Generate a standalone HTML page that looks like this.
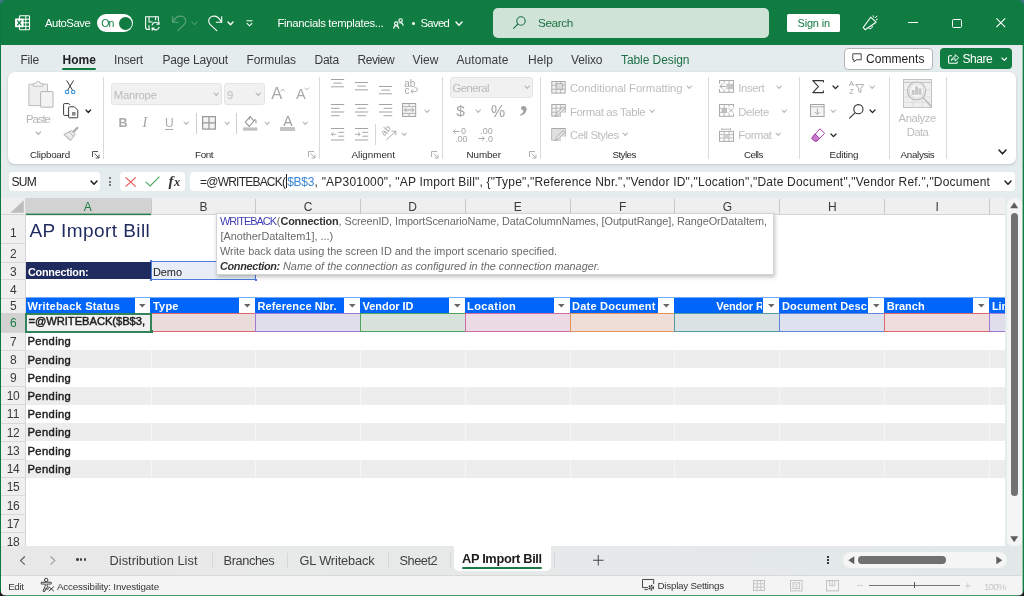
<!DOCTYPE html>
<html lang="en"><head><meta charset="utf-8"><title>Financials templates - Excel</title>
<style>
html,body{margin:0;padding:0;}
body{width:1024px;height:596px;overflow:hidden;background:#E5ECED;font-family:"Liberation Sans", sans-serif;position:relative;}
#root{position:absolute;left:0;top:0;width:1024px;height:596px;overflow:hidden;will-change:transform;}
.a{position:absolute;box-sizing:border-box;}
.t{position:absolute;white-space:pre;line-height:0;}
.t>i{display:inline-block;width:0;height:30px;vertical-align:baseline;}
svg{overflow:visible;}

.sep{background:#D8D8D8;width:1px;}

</style></head><body><div id="root">
<div class="a " style="left:0px;top:0px;width:1024px;height:44.8px;background:#107C41;"></div>
<div class="a " style="left:0px;top:0px;width:1px;height:596px;background:#0F7740;"></div>
<div class="a " style="left:1022px;top:0px;width:1px;height:596px;background:rgba(16,124,65,0.35);"></div>
<div class="a " style="left:1023px;top:0px;width:1px;height:596px;background:#107C41;"></div>
<div class="a " style="left:0px;top:595px;width:1024px;height:1px;background:#4A976C;"></div>
<svg class="a" style="left:14.9px;top:15px;" width="15" height="15.5" viewBox="0 0 15 15.5">
<rect x="4.5" y="0.8" width="10" height="14" rx="0.8" fill="none" stroke="#fff" stroke-width="1.1"/>
<path d="M8 4.2h6M8 7.8h6M8 11.3h6M10.8 1v13.6" stroke="#fff" stroke-width="1" fill="none"/>
<rect x="0" y="3.4" width="8.6" height="8.8" rx="0.8" fill="#fff"/>
<path d="M2.3 5.3l4 5M6.3 5.3l-4 5" stroke="#107C41" stroke-width="1.3" fill="none"/>
</svg>
<div class="t" id="t0" style="top:-3.00px;font-size:11.3px;color:#fff;left:45.00px;letter-spacing:-0.467px;"><i></i>AutoSave</div>
<div class="a " style="left:97px;top:14px;width:36px;height:18px;background:#fff;border-radius:9px;"></div>
<div class="a " style="left:118.5px;top:16.5px;width:13px;height:13px;background:#107C41;border-radius:50%;"></div>
<div class="t" id="t1" style="top:-3.00px;font-size:10.5px;color:#107C41;left:101.30px;letter-spacing:-1.010px;"><i></i>On</div>
<svg class="a" style="left:145px;top:16px;" width="15" height="15" viewBox="0 0 15 15">
<path d="M13.4 5.2V0.8H0.6v11.2l1.5 1.5h3.1" fill="none" stroke="#fff" stroke-width="1.1" stroke-linejoin="round"/>
<path d="M4 0.8v5.2h3.6M10.6 0.8v3.5M4 13.5V9.2" fill="none" stroke="#fff" stroke-width="1.1"/>
<path d="M7 9.3A3.7 3.7 0 0 1 13.7 7.9M14 5.6v2.6h-2.6M14.2 10.9A3.7 3.7 0 0 1 7.5 12.3M7.2 14.6v-2.6h2.6" fill="none" stroke="#fff" stroke-width="1.15"/>
</svg>
<svg class="a" style="left:172px;top:15px;" width="15" height="16" viewBox="0 0 15 16"><path d="M0.7 1.3V7.2H6.6" fill="none" stroke="#62A582" stroke-width="1.1" stroke-linejoin="round"/><path d="M1.2 6.8C3.2 2.8 6.6 0.6 9.8 1.3c3.4 0.8 4.8 4.2 3.4 6.8-.5.9-1.1 1.6-1.8 2.3L5.6 15.6" fill="none" stroke="#62A582" stroke-width="1.1" stroke-linecap="round"/></svg>
<svg class="a" style="left:191.10px;top:20.80px" width="7.00" height="4.80"><path d="M1 1 L3.50 3.80 L6.00 1" fill="none" stroke="#62A582" stroke-width="1" stroke-linecap="round" stroke-linejoin="round"/></svg>
<svg class="a" style="left:207.9px;top:15px;" width="15" height="16" viewBox="0 0 15 16"><g transform="translate(14.4,0) scale(-1,1)"><path d="M0.7 1.3V7.2H6.6" fill="none" stroke="#fff" stroke-width="1.1" stroke-linejoin="round"/><path d="M1.2 6.8C3.2 2.8 6.6 0.6 9.8 1.3c3.4 0.8 4.8 4.2 3.4 6.8-.5.9-1.1 1.6-1.8 2.3L5.6 15.6" fill="none" stroke="#fff" stroke-width="1.1" stroke-linecap="round"/></g></svg>
<svg class="a" style="left:226.80px;top:20.80px" width="7.00" height="4.80"><path d="M1 1 L3.50 3.80 L6.00 1" fill="none" stroke="#fff" stroke-width="1.35" stroke-linecap="round" stroke-linejoin="round"/></svg>
<svg class="a" style="left:246px;top:20px;" width="7" height="7" viewBox="0 0 7 7"><path d="M0.5 0.8h6" stroke="#fff" stroke-width="1"/><path d="M0.8 3.2L3.5 5.8 6.2 3.2" fill="none" stroke="#fff" stroke-width="1.1"/></svg>
<div class="t" id="t2" style="top:-3.00px;font-size:11.3px;color:#fff;left:277.50px;letter-spacing:-0.284px;"><i></i>Financials templates...</div>
<svg class="a" style="left:393px;top:17.5px;" width="11" height="11" viewBox="0 0 11 11"><circle cx="7.6" cy="2.4" r="1.7" fill="none" stroke="#fff" stroke-width="1.1"/><circle cx="3.2" cy="5.6" r="1.7" fill="none" stroke="#fff" stroke-width="1.1"/><path d="M0.6 10.6c.3-2.2 1.3-3 2.6-3s2.3.8 2.6 3M6.4 5.2c.4-.4.8-.5 1.2-.5 1.3 0 2.3.8 2.6 3" fill="none" stroke="#fff" stroke-width="1.1"/></svg>
<div class="a " style="left:412.3px;top:22.1px;width:3px;height:3px;background:#fff;border-radius:50%;"></div>
<div class="t" id="t3" style="top:-3.00px;font-size:11.3px;color:#fff;left:420.50px;letter-spacing:-0.677px;"><i></i>Saved</div>
<svg class="a" style="left:455.30px;top:20.80px" width="8.00" height="5.20"><path d="M1 1 L4.00 4.20 L7.00 1" fill="none" stroke="#fff" stroke-width="1.4" stroke-linecap="round" stroke-linejoin="round"/></svg>
<div class="a " style="left:493px;top:8.4px;width:275.6px;height:29.2px;background:#CFE3D7;border-radius:5px;"></div>
<svg class="a" style="left:512.5px;top:16px;" width="13" height="13" viewBox="0 0 13 13"><circle cx="8" cy="5" r="4.2" fill="none" stroke="#1E7145" stroke-width="1.1"/><path d="M5 8L0.6 12.4" stroke="#1E7145" stroke-width="1.1" stroke-linecap="round"/></svg>
<div class="t" id="t4" style="top:-3.00px;font-size:11.8px;color:#1E7145;left:538.00px;letter-spacing:-0.435px;"><i></i>Search</div>
<div class="a " style="left:786.6px;top:14px;width:53.4px;height:17.5px;background:#fff;border-radius:1.5px;"></div>
<div class="t" id="t5" style="top:-3.00px;font-size:11px;color:#107C41;left:797.50px;letter-spacing:-0.175px;"><i></i>Sign in</div>
<svg class="a" style="left:862px;top:14px;" width="17" height="17" viewBox="0 0 17 17"><path d="M1.2 13.5L3.1 15.7 14.1 8.2 8.7 3.2z" fill="none" stroke="#fff" stroke-width="1.1" stroke-linejoin="round"/><path d="M6.3 13.7A1.9 1.9 0 0 0 9.9 11.3" fill="none" stroke="#fff" stroke-width="1"/><path d="M11.2 1.7l.4 1.4M13.4 3.6l1.5-1.5M14.2 5.8l1.2-.5" fill="none" stroke="#fff" stroke-width="1" stroke-linecap="round"/></svg>
<div class="a " style="left:908px;top:21.6px;width:10px;height:1px;background:#fff;"></div>
<div class="a " style="left:952px;top:18.5px;width:9.5px;height:9.2px;border:1.1px solid #fff;border-radius:1.5px;"></div>
<svg class="a" style="left:996.4px;top:18.3px;" width="9.6" height="9.6" viewBox="0 0 9.6 9.6"><path d="M0.4 0.4l8.8 8.8M9.2 0.4L0.4 9.2" stroke="#fff" stroke-width="1.1"/></svg>
<div class="t" id="t6" style="top:33.50px;font-size:12px;color:#3B3B3B;left:20.50px;letter-spacing:-0.241px;"><i></i>File</div>
<div class="t" id="t7" style="top:33.50px;font-size:12px;color:#222;left:62.50px;font-weight:700;letter-spacing:0.045px;"><i></i>Home</div>
<div class="a " style="left:62.2px;top:67.7px;width:33.8px;height:1.9px;background:#107C41;border-radius:1px;"></div>
<div class="t" id="t8" style="top:33.50px;font-size:12px;color:#3B3B3B;left:114.00px;letter-spacing:-0.185px;"><i></i>Insert</div>
<div class="t" id="t9" style="top:33.50px;font-size:12px;color:#3B3B3B;left:162.50px;letter-spacing:-0.180px;"><i></i>Page Layout</div>
<div class="t" id="t10" style="top:33.50px;font-size:12px;color:#3B3B3B;left:246.50px;letter-spacing:-0.069px;"><i></i>Formulas</div>
<div class="t" id="t11" style="top:33.50px;font-size:12px;color:#3B3B3B;left:314.50px;letter-spacing:-0.246px;"><i></i>Data</div>
<div class="t" id="t12" style="top:33.50px;font-size:12px;color:#3B3B3B;left:357.50px;letter-spacing:-0.429px;"><i></i>Review</div>
<div class="t" id="t13" style="top:33.50px;font-size:12px;color:#3B3B3B;left:412.50px;letter-spacing:0.058px;"><i></i>View</div>
<div class="t" id="t14" style="top:33.50px;font-size:12px;color:#3B3B3B;left:456.50px;letter-spacing:0.083px;"><i></i>Automate</div>
<div class="t" id="t15" style="top:33.50px;font-size:12px;color:#3B3B3B;left:528.00px;letter-spacing:0.089px;"><i></i>Help</div>
<div class="t" id="t16" style="top:33.50px;font-size:12px;color:#3B3B3B;left:571.00px;letter-spacing:-0.097px;"><i></i>Velixo</div>
<div class="t" id="t17" style="top:33.50px;font-size:12px;color:#1E7145;left:621.00px;letter-spacing:-0.076px;"><i></i>Table Design</div>
<div class="a " style="left:844.3px;top:48px;width:88.6px;height:21.6px;background:#fff;border:1px solid #B5B5B5;border-radius:4px;"></div>
<svg class="a" style="left:852.3px;top:53.2px;" width="10" height="10" viewBox="0 0 10 10"><path d="M0.8 0.8h8.4v6H4.2L2 9V6.8H0.8z" fill="none" stroke="#333" stroke-width="0.9" stroke-linejoin="round"/></svg>
<div class="t" id="t18" style="top:33.00px;font-size:12px;color:#222;left:866.00px;letter-spacing:0.065px;"><i></i>Comments</div>
<div class="a " style="left:940px;top:48px;width:72px;height:21.2px;background:#107C41;border-radius:4px;"></div>
<svg class="a" style="left:947.5px;top:53.4px;" width="11" height="10.5" viewBox="0 0 11 10.5"><path d="M4 2.8H1.6a1 1 0 0 0-1 1v5.4a1 1 0 0 0 1 1h6.6a1 1 0 0 0 1-1V8.4" fill="none" stroke="#fff" stroke-width="1.1"/><path d="M3.4 7.6c.3-2.4 1.6-3.6 3.8-3.7V1.6l3.4 3.2-3.4 3.2V5.8c-1.8 0-2.9.5-3.8 1.8z" fill="none" stroke="#fff" stroke-width="0.9" stroke-linejoin="round"/></svg>
<div class="t" id="t19" style="top:33.00px;font-size:12px;color:#fff;left:962.50px;letter-spacing:-0.451px;"><i></i>Share</div>
<svg class="a" style="left:1001.20px;top:56.80px" width="6.60" height="4.40"><path d="M1 1 L3.30 3.40 L5.60 1" fill="none" stroke="#fff" stroke-width="1.1" stroke-linecap="round" stroke-linejoin="round"/></svg>
<div class="a " style="left:8px;top:72.4px;width:1008px;height:91.6px;background:#fff;border-radius:7px;box-shadow:0 1px 3px rgba(0,0,0,0.16);"></div>
<div class="a " style="left:103px;top:77px;width:1px;height:81.5px;background:#DADADA;"></div>
<div class="a " style="left:319px;top:77px;width:1px;height:81.5px;background:#DADADA;"></div>
<div class="a " style="left:441.8px;top:77px;width:1px;height:81.5px;background:#DADADA;"></div>
<div class="a " style="left:540px;top:77px;width:1px;height:81.5px;background:#DADADA;"></div>
<div class="a " style="left:708px;top:77px;width:1px;height:81.5px;background:#DADADA;"></div>
<div class="a " style="left:799.3px;top:77px;width:1px;height:81.5px;background:#DADADA;"></div>
<div class="a " style="left:889px;top:77px;width:1px;height:81.5px;background:#DADADA;"></div>
<div class="a " style="left:945.6px;top:77px;width:1px;height:81.5px;background:#DADADA;"></div>
<div class="t" id="t20" style="top:128.00px;font-size:9.8px;color:#2B2B2B;left:29.90px;letter-spacing:-0.216px;"><i></i>Clipboard</div>
<div class="t" id="t21" style="top:128.00px;font-size:9.8px;color:#2B2B2B;left:195.00px;letter-spacing:-0.346px;"><i></i>Font</div>
<div class="t" id="t22" style="top:128.00px;font-size:9.8px;color:#2B2B2B;left:351.50px;letter-spacing:-0.009px;"><i></i>Alignment</div>
<div class="t" id="t23" style="top:128.00px;font-size:9.8px;color:#2B2B2B;left:466.50px;letter-spacing:-0.065px;"><i></i>Number</div>
<div class="t" id="t24" style="top:128.00px;font-size:9.8px;color:#2B2B2B;left:612.50px;letter-spacing:-0.580px;"><i></i>Styles</div>
<div class="t" id="t25" style="top:128.00px;font-size:9.8px;color:#2B2B2B;left:744.00px;letter-spacing:-0.618px;"><i></i>Cells</div>
<div class="t" id="t26" style="top:128.00px;font-size:9.8px;color:#2B2B2B;left:829.50px;letter-spacing:-0.149px;"><i></i>Editing</div>
<div class="t" id="t27" style="top:128.00px;font-size:9.8px;color:#2B2B2B;left:900.60px;letter-spacing:-0.331px;"><i></i>Analysis</div>
<svg class="a" style="left:92px;top:151px;" width="8" height="8" viewBox="0 0 8 8"><path d="M0.5 6V0.5H6" fill="none" stroke="#555" stroke-width="1"/><path d="M2.6 2.6L7 7M7 3.6V7H3.6" fill="none" stroke="#555" stroke-width="1"/></svg>
<svg class="a" style="left:308px;top:151px;" width="8" height="8" viewBox="0 0 8 8"><path d="M0.5 6V0.5H6" fill="none" stroke="#B0B0B0" stroke-width="1"/><path d="M2.6 2.6L7 7M7 3.6V7H3.6" fill="none" stroke="#B0B0B0" stroke-width="1"/></svg>
<svg class="a" style="left:431px;top:151px;" width="8" height="8" viewBox="0 0 8 8"><path d="M0.5 6V0.5H6" fill="none" stroke="#B0B0B0" stroke-width="1"/><path d="M2.6 2.6L7 7M7 3.6V7H3.6" fill="none" stroke="#B0B0B0" stroke-width="1"/></svg>
<svg class="a" style="left:529px;top:151px;" width="8" height="8" viewBox="0 0 8 8"><path d="M0.5 6V0.5H6" fill="none" stroke="#B0B0B0" stroke-width="1"/><path d="M2.6 2.6L7 7M7 3.6V7H3.6" fill="none" stroke="#B0B0B0" stroke-width="1"/></svg>
<svg class="a" style="left:27.7px;top:80.4px;" width="26" height="28" viewBox="0 0 26 28">
<path d="M0.9 4.2h18.6v21.4H0.9z" fill="#EEEEEE" stroke="#BDBDBD" stroke-width="1" stroke-linejoin="round"/>
<path d="M5.2 6.2V3.6h2.6a2.2 2.2 0 0 1 4.4 0h2.6v2.6z" fill="#F6F6F6" stroke="#BDBDBD" stroke-width="1" stroke-linejoin="round"/>
<rect x="12.6" y="11.6" width="12.4" height="15.6" rx="0.6" fill="#F3F3F3" stroke="#B5B5B5" stroke-width="1"/>
</svg>
<div class="t" id="t28" style="top:92.60px;font-size:11.3px;color:#B4B4B4;left:26.00px;letter-spacing:-1.020px;"><i></i>Paste</div>
<svg class="a" style="left:34.50px;top:131.20px" width="6.60" height="4.40"><path d="M1 1 L3.30 3.40 L5.60 1" fill="none" stroke="#B0B0B0" stroke-width="1.15" stroke-linecap="round" stroke-linejoin="round"/></svg>
<svg class="a" style="left:65.4px;top:80.4px;" width="10.2" height="14.2" viewBox="0 0 10.2 14.2"><path d="M1.6 0.4L7.8 10.6M8.6 0.4L2.4 10.6" stroke="#3A3A3A" stroke-width="1" fill="none"/><circle cx="2" cy="12" r="1.7" fill="none" stroke="#3A96DD" stroke-width="1.15"/><circle cx="8.2" cy="12" r="1.7" fill="none" stroke="#3A96DD" stroke-width="1.15"/></svg>
<svg class="a" style="left:63px;top:103px;" width="15.6" height="15.4" viewBox="0 0 15.6 15.4"><path d="M5.6 12.4H1.4a.8.8 0 0 1-.8-.8V1.4a.8.8 0 0 1 .8-.8h4.4l1.4 1.4" fill="none" stroke="#3A3A3A" stroke-width="1"/><path d="M6.4 3.8h5l3.4 3.4v6.8a.8.8 0 0 1-.8.8H6.4a.8.8 0 0 1-.8-.8V4.6a.8.8 0 0 1 .8-.8z" fill="#fff" stroke="#3A3A3A" stroke-width="1"/><rect x="9" y="9" width="3.6" height="3.6" fill="#8A8A8A"/></svg>
<svg class="a" style="left:84.70px;top:108.75px" width="6.60" height="4.50"><path d="M1 1 L3.30 3.50 L5.60 1" fill="none" stroke="#222" stroke-width="1.3" stroke-linecap="round" stroke-linejoin="round"/></svg>
<svg class="a" style="left:63px;top:127px;" width="16" height="15" viewBox="0 0 16 15"><path d="M14.4 0.9L10.4 4.9" stroke="#ADADAD" stroke-width="2.2" stroke-linecap="round"/><path d="M8.4 3.6L12.2 7.4 7.4 13.6 0.8 7.6z" fill="#ECECEC" stroke="#ADADAD" stroke-width="1" stroke-linejoin="round"/><path d="M6.4 5.2l4.2 4.2" stroke="#ADADAD" stroke-width="0.9"/><path d="M3.4 8.2l3.6 3.8" stroke="#C9C9C9" stroke-width="0.8"/></svg>
<div class="a " style="left:111px;top:83.4px;width:111.4px;height:21.6px;background:#F1F1F1;border:1px solid #E4E4E4;border-radius:3px;"></div>
<div class="t" id="t29" style="top:69.00px;font-size:11.3px;color:#BABABA;left:113.80px;letter-spacing:-0.245px;"><i></i>Manrope</div>
<svg class="a" style="left:213.30px;top:92.20px" width="6.40" height="4.40"><path d="M1 1 L3.20 3.40 L5.40 1" fill="none" stroke="#B0B0B0" stroke-width="1.1" stroke-linecap="round" stroke-linejoin="round"/></svg>
<div class="a " style="left:224.4px;top:83.4px;width:40.3px;height:21.6px;background:#F1F1F1;border:1px solid #E4E4E4;border-radius:3px;"></div>
<div class="t" id="t30" style="top:69.00px;font-size:11.3px;color:#BABABA;left:227.00px;"><i></i>9</div>
<svg class="a" style="left:255.30px;top:92.20px" width="6.40" height="4.40"><path d="M1 1 L3.20 3.40 L5.40 1" fill="none" stroke="#B0B0B0" stroke-width="1.1" stroke-linecap="round" stroke-linejoin="round"/></svg>
<div class="t" id="t31" style="top:68.90px;font-size:16.5px;color:#A9A9A9;left:271.20px;"><i></i>A</div>
<svg class="a" style="left:280.00px;top:89.55px" width="5.60" height="0.10"><path d="M1 1 L2.80 -0.90 L4.60 1" fill="none" stroke="#A9A9A9" stroke-width="0.9" stroke-linecap="round" stroke-linejoin="round"/></svg>
<div class="t" id="t32" style="top:68.90px;font-size:14.5px;color:#A9A9A9;left:296.00px;"><i></i>A</div>
<svg class="a" style="left:303.60px;top:87.35px" width="5.60" height="3.90"><path d="M1 1 L2.80 2.90 L4.60 1" fill="none" stroke="#A9A9A9" stroke-width="0.9" stroke-linecap="round" stroke-linejoin="round"/></svg>
<div class="t" id="t33" style="top:97.00px;font-size:12.5px;color:#A9A9A9;left:118.50px;font-weight:700;"><i></i>B</div>
<div class="t" id="t34" style="top:97.40px;font-size:14px;color:#A3A3A3;left:142.40px;font-style:italic;font-family:'Liberation Serif', serif;"><i></i>I</div>
<div class="t" id="t35" style="top:97.00px;font-size:12px;color:#A9A9A9;left:165.00px;"><i></i>U</div>
<div class="a " style="left:165px;top:128.6px;width:7.8px;height:1px;background:#A9A9A9;"></div>
<svg class="a" style="left:183.30px;top:121.40px" width="6.40" height="4.40"><path d="M1 1 L3.20 3.40 L5.40 1" fill="none" stroke="#B4B4B4" stroke-width="1.1" stroke-linecap="round" stroke-linejoin="round"/></svg>
<div class="a " style="left:196px;top:113px;width:1px;height:21.4px;background:#D0D0D0;"></div>
<svg class="a" style="left:202px;top:116px;" width="14" height="13.7" viewBox="0 0 14 13.7"><rect x="0.6" y="0.6" width="12.8" height="12.5" fill="#F3F3F3" stroke="#9A9A9A" stroke-width="1.25"/><path d="M7 0.6v12.5M0.6 6.85h12.8" stroke="#9A9A9A" stroke-width="1.25"/></svg>
<svg class="a" style="left:224.30px;top:121.40px" width="6.40" height="4.40"><path d="M1 1 L3.20 3.40 L5.40 1" fill="none" stroke="#B4B4B4" stroke-width="1.1" stroke-linecap="round" stroke-linejoin="round"/></svg>
<div class="a " style="left:236px;top:113px;width:1px;height:21.4px;background:#D0D0D0;"></div>
<svg class="a" style="left:243px;top:116px;" width="14.5" height="15" viewBox="0 0 14.5 15"><path d="M7.2 0.6L2.2 6.2l4.1 4.3L11 4.9z" fill="none" stroke="#9C9C9C" stroke-width="1.15" stroke-linejoin="round"/><path d="M7.6 0.4c-1.2.8-1.6 2.2-.8 3.2M10.8 5c.6-1.5 1.8-1.7 2.1-.5.2.9.2 1.9 0 2.9" fill="none" stroke="#9C9C9C" stroke-width="1.1"/><rect x="0" y="11.4" width="14.4" height="3.3" fill="#C2C2C2"/></svg>
<svg class="a" style="left:264.30px;top:121.40px" width="6.40" height="4.40"><path d="M1 1 L3.20 3.40 L5.40 1" fill="none" stroke="#B4B4B4" stroke-width="1.1" stroke-linecap="round" stroke-linejoin="round"/></svg>
<div class="t" id="t36" style="top:96.40px;font-size:14px;color:#9F9F9F;left:283.20px;"><i></i>A</div>
<div class="a " style="left:280px;top:127.4px;width:15px;height:3.4px;background:#C4C4C4;"></div>
<svg class="a" style="left:301.60px;top:121.40px" width="6.40" height="4.40"><path d="M1 1 L3.20 3.40 L5.40 1" fill="none" stroke="#B4B4B4" stroke-width="1.1" stroke-linecap="round" stroke-linejoin="round"/></svg>
<svg class="a" style="left:331.4px;top:79.2px;" width="13.2" height="9" viewBox="0 0 13.2 9"><path d="M0.00 0.50h13.20" stroke="#A4A4A4" stroke-width="1"/><path d="M2.40 4.10h8.40" stroke="#A4A4A4" stroke-width="1"/><path d="M0.00 7.80h13.20" stroke="#A4A4A4" stroke-width="1"/></svg>
<svg class="a" style="left:355px;top:81.9px;" width="13.2" height="9" viewBox="0 0 13.2 9"><path d="M0.00 0.50h13.20" stroke="#A4A4A4" stroke-width="1"/><path d="M2.40 4.10h8.40" stroke="#A4A4A4" stroke-width="1"/><path d="M0.00 7.80h13.20" stroke="#A4A4A4" stroke-width="1"/></svg>
<svg class="a" style="left:379px;top:85.9px;" width="13.2" height="9" viewBox="0 0 13.2 9"><path d="M0.00 0.50h13.20" stroke="#A4A4A4" stroke-width="1"/><path d="M2.40 4.10h8.40" stroke="#A4A4A4" stroke-width="1"/><path d="M0.00 7.80h13.20" stroke="#A4A4A4" stroke-width="1"/></svg>
<svg class="a" style="left:331.4px;top:104px;" width="13.2" height="13" viewBox="0 0 13.2 13"><path d="M0.00 0.50h13.20" stroke="#A4A4A4" stroke-width="1"/><path d="M0.00 4.30h8.60" stroke="#A4A4A4" stroke-width="1"/><path d="M0.00 8.00h13.20" stroke="#A4A4A4" stroke-width="1"/><path d="M0.00 11.70h8.60" stroke="#A4A4A4" stroke-width="1"/></svg>
<svg class="a" style="left:355px;top:104px;" width="13.2" height="13" viewBox="0 0 13.2 13"><path d="M0.00 0.50h13.20" stroke="#A4A4A4" stroke-width="1"/><path d="M2.30 4.30h8.60" stroke="#A4A4A4" stroke-width="1"/><path d="M0.00 8.00h13.20" stroke="#A4A4A4" stroke-width="1"/><path d="M2.30 11.70h8.60" stroke="#A4A4A4" stroke-width="1"/></svg>
<svg class="a" style="left:379px;top:104px;" width="13.2" height="13" viewBox="0 0 13.2 13"><path d="M0.00 0.50h13.20" stroke="#A4A4A4" stroke-width="1"/><path d="M4.60 4.30h8.60" stroke="#A4A4A4" stroke-width="1"/><path d="M0.00 8.00h13.20" stroke="#A4A4A4" stroke-width="1"/><path d="M4.60 11.70h8.60" stroke="#A4A4A4" stroke-width="1"/></svg>
<div class="t" id="t37" style="top:56.60px;font-size:10px;color:#A4A4A4;left:404.20px;"><i></i>ab</div>
<div class="t" id="t38" style="top:63.60px;font-size:10px;color:#A4A4A4;left:404.40px;"><i></i>c</div>
<svg class="a" style="left:409.8px;top:87.4px;" width="8" height="6.6" viewBox="0 0 8 6.6"><path d="M1 4.4h4.4a1.9 1.9 0 0 0 0-3.8H4.6" fill="none" stroke="#A4A4A4" stroke-width="0.9"/><path d="M3 2.4L0.9 4.4 3 6.4" fill="none" stroke="#A4A4A4" stroke-width="0.9"/></svg>
<svg class="a" style="left:402px;top:103px;" width="14.2" height="14" viewBox="0 0 14.2 14"><rect x="0.5" y="0.5" width="13.2" height="13" fill="#F2F2F2" stroke="#A4A4A4" stroke-width="1"/><path d="M0.5 3.6h13.2M0.5 10.4h13.2M7.1 0.5v3.1M7.1 10.4v3.1" stroke="#A4A4A4" stroke-width="0.8"/><path d="M2.4 7h9.4M4.2 5.2L2.4 7l1.8 1.8M10 5.2L11.8 7 10 8.8" fill="none" stroke="#9A9A9A" stroke-width="0.9"/></svg>
<svg class="a" style="left:423.50px;top:108.60px" width="6.40" height="4.40"><path d="M1 1 L3.20 3.40 L5.40 1" fill="none" stroke="#B4B4B4" stroke-width="1.1" stroke-linecap="round" stroke-linejoin="round"/></svg>
<svg class="a" style="left:331.4px;top:127.6px;" width="13.2" height="12.6" viewBox="0 0 13.2 12.6"><path d="M0.00 0.50h13.20" stroke="#A4A4A4" stroke-width="1"/><path d="M7.20 4.30h6.00" stroke="#A4A4A4" stroke-width="1"/><path d="M7.20 8.20h6.00" stroke="#A4A4A4" stroke-width="1"/><path d="M0.00 12.00h13.20" stroke="#A4A4A4" stroke-width="1"/><path d="M0.4 6.25h5M2.4 4.2L0.4 6.25l2 2.05" fill="none" stroke="#A4A4A4" stroke-width="0.9"/></svg>
<svg class="a" style="left:355px;top:127.6px;" width="13.2" height="12.6" viewBox="0 0 13.2 12.6"><path d="M0.00 0.50h13.20" stroke="#A4A4A4" stroke-width="1"/><path d="M7.20 4.30h6.00" stroke="#A4A4A4" stroke-width="1"/><path d="M7.20 8.20h6.00" stroke="#A4A4A4" stroke-width="1"/><path d="M0.00 12.00h13.20" stroke="#A4A4A4" stroke-width="1"/><path d="M0.2 6.25h5M3.2 4.2l2 2.05-2 2.05" fill="none" stroke="#A4A4A4" stroke-width="0.9"/></svg>
<div class="a " style="left:375px;top:123.7px;width:1px;height:21.4px;background:#D6D6D6;"></div>
<svg class="a" style="left:380.7px;top:127px;" width="16" height="13.6" viewBox="0 0 16 13.6"><text x="0" y="0" transform="translate(3.6,9.4) rotate(-48)" font-size="9.4" fill="#A4A4A4" font-family="Liberation Sans, sans-serif">ab</text><path d="M5.2 13L14.6 4.6M10.6 4.2h4.2v4" fill="none" stroke="#A4A4A4" stroke-width="0.9"/></svg>
<svg class="a" style="left:400.80px;top:132.20px" width="6.40" height="4.40"><path d="M1 1 L3.20 3.40 L5.40 1" fill="none" stroke="#B4B4B4" stroke-width="1.1" stroke-linecap="round" stroke-linejoin="round"/></svg>
<div class="a " style="left:450px;top:76.6px;width:82.6px;height:21px;background:#F1F1F1;border:1px solid #E4E4E4;border-radius:3px;"></div>
<div class="t" id="t39" style="top:61.80px;font-size:11.3px;color:#BABABA;left:452.40px;letter-spacing:-0.493px;"><i></i>General</div>
<svg class="a" style="left:523.60px;top:85.20px" width="6.40" height="4.40"><path d="M1 1 L3.20 3.40 L5.40 1" fill="none" stroke="#B0B0B0" stroke-width="1.1" stroke-linecap="round" stroke-linejoin="round"/></svg>
<div class="t" id="t40" style="top:86.40px;font-size:15.5px;color:#A4A4A4;left:456.20px;"><i></i>$</div>
<svg class="a" style="left:474.60px;top:108.60px" width="6.40" height="4.40"><path d="M1 1 L3.20 3.40 L5.40 1" fill="none" stroke="#B4B4B4" stroke-width="1.1" stroke-linecap="round" stroke-linejoin="round"/></svg>
<div class="t" id="t41" style="top:87.00px;font-size:16px;color:#A4A4A4;left:491.00px;"><i></i>%</div>
<div class="t" id="t42" style="top:97.30px;font-size:32px;color:#A2A2A2;left:518.30px;font-weight:700;font-family:'Liberation Serif', serif;"><i></i>’</div>
<div class="t" id="t43" style="top:104.40px;font-size:9px;color:#A4A4A4;left:461.00px;"><i></i>0</div>
<div class="t" id="t44" style="top:111.60px;font-size:9px;color:#A4A4A4;left:455.00px;"><i></i>.00</div>
<svg class="a" style="left:453.4px;top:129.2px;" width="7" height="5" viewBox="0 0 7 5"><path d="M0.5 2.5h6M2.6 0.4L0.5 2.5l2.1 2.1" fill="none" stroke="#A4A4A4" stroke-width="0.9"/></svg>
<div class="t" id="t45" style="top:104.40px;font-size:9px;color:#A4A4A4;left:480.20px;"><i></i>.00</div>
<div class="t" id="t46" style="top:111.60px;font-size:9px;color:#A4A4A4;left:485.60px;"><i></i>.0</div>
<svg class="a" style="left:477.6px;top:136.4px;" width="7" height="5" viewBox="0 0 7 5"><path d="M0.3 2.5h6M4.2 0.4l2.1 2.1-2.1 2.1" fill="none" stroke="#A4A4A4" stroke-width="0.9"/></svg>
<svg class="a" style="left:551.4px;top:80.6px;" width="15" height="13" viewBox="0 0 14.4 13"><rect x="0.5" y="0.5" width="13.4" height="11.6" fill="#F3F3F3" stroke="#A9A9A9" stroke-width="1"/><path d="M0.5 4.2h13.4M0.5 8.2h13.4M4.8 0.5v11.6M9.4 0.5v11.6" stroke="#A9A9A9" stroke-width="0.8"/><rect x="4.8" y="2.6" width="6.6" height="5.6" fill="#DCDCDC" stroke="#A9A9A9" stroke-width="0.8"/></svg>
<svg class="a" style="left:551.4px;top:104.2px;" width="15" height="13" viewBox="0 0 14.4 13"><rect x="0.5" y="0.5" width="13.4" height="11.6" fill="#F3F3F3" stroke="#A9A9A9" stroke-width="1"/><path d="M0.5 4.2h13.4M0.5 8.2h13.4M4.8 0.5v11.6M9.4 0.5v11.6" stroke="#A9A9A9" stroke-width="0.8"/><path d="M13.6 4.2l-6.4 6.6-3.4 1.8 1.4-3.4 6.6-6.4z" fill="#E9E9E9" stroke="#A8A8A8" stroke-width="0.9" stroke-linejoin="round"/><rect x="9.6" y="8.6" width="5" height="4.4" fill="#fff"/></svg>
<svg class="a" style="left:551.4px;top:128px;" width="15" height="13" viewBox="0 0 14.4 13"><rect x="0.5" y="0.5" width="13.4" height="11.6" fill="#F3F3F3" stroke="#A9A9A9" stroke-width="1"/><path d="M0.5 4.2h13.4M0.5 8.2h13.4M4.8 0.5v11.6M9.4 0.5v11.6" stroke="#A9A9A9" stroke-width="0.8"/><rect x="1" y="1" width="12.4" height="10.6" fill="#DFDFDF"/><path d="M13.6 4.2l-6.4 6.6-3.4 1.8 1.4-3.4 6.6-6.4z" fill="#E9E9E9" stroke="#A8A8A8" stroke-width="0.9" stroke-linejoin="round"/><rect x="9.6" y="8.6" width="5" height="4.4" fill="#fff"/></svg>
<div class="t" id="t47" style="top:61.80px;font-size:11.3px;color:#BDBDBD;left:569.90px;letter-spacing:-0.044px;"><i></i>Conditional Formatting</div>
<svg class="a" style="left:686.20px;top:85.00px" width="6.40" height="4.40"><path d="M1 1 L3.20 3.40 L5.40 1" fill="none" stroke="#B4B4B4" stroke-width="1.1" stroke-linecap="round" stroke-linejoin="round"/></svg>
<div class="t" id="t48" style="top:85.60px;font-size:11.3px;color:#BDBDBD;left:569.90px;letter-spacing:-0.365px;"><i></i>Format as Table</div>
<svg class="a" style="left:648.90px;top:108.80px" width="6.40" height="4.40"><path d="M1 1 L3.20 3.40 L5.40 1" fill="none" stroke="#B4B4B4" stroke-width="1.1" stroke-linecap="round" stroke-linejoin="round"/></svg>
<div class="t" id="t49" style="top:109.20px;font-size:11.3px;color:#BDBDBD;left:569.90px;letter-spacing:-0.417px;"><i></i>Cell Styles</div>
<svg class="a" style="left:622.30px;top:132.40px" width="6.40" height="4.40"><path d="M1 1 L3.20 3.40 L5.40 1" fill="none" stroke="#B4B4B4" stroke-width="1.1" stroke-linecap="round" stroke-linejoin="round"/></svg>
<svg class="a" style="left:719px;top:80.4px;" width="15" height="13.6" viewBox="0 0 15 13.6"><rect x="0.5" y="0.5" width="14" height="11.8" fill="#FBFBFB" stroke="#ACACAC"/><path d="M0.5 4.4h14M0.5 8.4h14M5.2 0.5v11.8M10 0.5v11.8" stroke="#ACACAC" stroke-width="0.8"/><rect x="0" y="3.6" width="7.4" height="5.4" fill="#fff"/><rect x="7.6" y="4" width="6.6" height="4.8" fill="#C6C6C6"/><path d="M1 6.4h6.2M3.4 4L1 6.4l2.4 2.4" fill="none" stroke="#A6A6A6" stroke-width="1"/></svg>
<svg class="a" style="left:719px;top:104.2px;" width="15" height="13.6" viewBox="0 0 15 13.6"><rect x="0.5" y="0.5" width="14" height="11.8" fill="#FBFBFB" stroke="#ACACAC"/><path d="M0.5 4.4h14M0.5 8.4h14M5.2 0.5v11.8M10 0.5v11.8" stroke="#ACACAC" stroke-width="0.8"/><rect x="2.6" y="4" width="5.4" height="4.8" fill="#BDBDBD"/><rect x="8.4" y="3.2" width="7" height="6.4" fill="#fff"/><path d="M9.8 4.2l4.4 4.4M14.2 4.2L9.8 8.6" stroke="#ADADAD" stroke-width="1"/></svg>
<svg class="a" style="left:719px;top:127.6px;" width="15" height="13.6" viewBox="0 0 15 13.6"><path d="M2.8 0.2v2M11.6 0.2v2M2.8 1.2h8.8" stroke="#ACACAC" stroke-width="0.9"/><rect x="0.5" y="3.4" width="14" height="10" fill="#FBFBFB" stroke="#ACACAC"/><path d="M0.5 6.6h14M0.5 10h14M5.2 3.4v10M10 3.4v10" stroke="#ACACAC" stroke-width="0.8"/><rect x="5.2" y="6.6" width="4.8" height="3.4" fill="#CFCFCF"/></svg>
<div class="t" id="t50" style="top:61.80px;font-size:11.3px;color:#BDBDBD;left:738.30px;letter-spacing:-0.394px;"><i></i>Insert</div>
<svg class="a" style="left:775.70px;top:85.00px" width="6.40" height="4.40"><path d="M1 1 L3.20 3.40 L5.40 1" fill="none" stroke="#B4B4B4" stroke-width="1.1" stroke-linecap="round" stroke-linejoin="round"/></svg>
<div class="t" id="t51" style="top:85.60px;font-size:11.3px;color:#BDBDBD;left:738.30px;letter-spacing:-0.356px;"><i></i>Delete</div>
<svg class="a" style="left:780.80px;top:108.80px" width="6.40" height="4.40"><path d="M1 1 L3.20 3.40 L5.40 1" fill="none" stroke="#B4B4B4" stroke-width="1.1" stroke-linecap="round" stroke-linejoin="round"/></svg>
<div class="t" id="t52" style="top:109.20px;font-size:11.3px;color:#BDBDBD;left:738.30px;letter-spacing:-0.415px;"><i></i>Format</div>
<svg class="a" style="left:775.20px;top:132.40px" width="6.40" height="4.40"><path d="M1 1 L3.20 3.40 L5.40 1" fill="none" stroke="#B4B4B4" stroke-width="1.1" stroke-linecap="round" stroke-linejoin="round"/></svg>
<svg class="a" style="left:812px;top:80.4px;" width="12" height="13.2" viewBox="0 0 12 13.2"><path d="M11.4 2.6V0.6H0.8L6.4 6.6 0.8 12.6h10.6v-2" fill="none" stroke="#333" stroke-width="1.1" stroke-linejoin="round"/></svg>
<svg class="a" style="left:831.80px;top:84.90px" width="7.00" height="4.60"><path d="M1 1 L3.50 3.60 L6.00 1" fill="none" stroke="#222" stroke-width="1.25" stroke-linecap="round" stroke-linejoin="round"/></svg>
<div class="t" id="t53" style="top:56.40px;font-size:7.4px;color:#A4A4A4;left:849.00px;"><i></i>A</div>
<div class="t" id="t54" style="top:64.00px;font-size:7.4px;color:#A4A4A4;left:849.30px;"><i></i>Z</div>
<svg class="a" style="left:854.6px;top:83.6px;" width="9.4" height="9" viewBox="0 0 9.4 9"><path d="M0.6 0.6h8.2L5.8 4.2v4.2L3.6 7.2v-3z" fill="none" stroke="#A4A4A4" stroke-width="0.9" stroke-linejoin="round"/></svg>
<svg class="a" style="left:868.90px;top:85.00px" width="6.40" height="4.40"><path d="M1 1 L3.20 3.40 L5.40 1" fill="none" stroke="#B4B4B4" stroke-width="1.1" stroke-linecap="round" stroke-linejoin="round"/></svg>
<svg class="a" style="left:810.4px;top:104px;" width="14.6" height="13" viewBox="0 0 14.6 13"><rect x="0.5" y="0.5" width="13.6" height="12" fill="#F3F3F3" stroke="#A4A4A4"/><path d="M0.5 2.8h13.6" stroke="#A4A4A4" stroke-width="0.8"/><path d="M7.3 4.6v5.6M4.9 8l2.4 2.4L9.7 8" fill="none" stroke="#A3A3A3" stroke-width="0.9"/></svg>
<svg class="a" style="left:830.00px;top:108.60px" width="6.40" height="4.40"><path d="M1 1 L3.20 3.40 L5.40 1" fill="none" stroke="#B4B4B4" stroke-width="1.1" stroke-linecap="round" stroke-linejoin="round"/></svg>
<svg class="a" style="left:849.3px;top:103.5px;" width="14.6" height="14.6" viewBox="0 0 14.6 14.6"><circle cx="9.4" cy="5.2" r="4.6" fill="none" stroke="#333" stroke-width="1.1"/><path d="M6 8.8L0.6 14.2" stroke="#333" stroke-width="1.1" stroke-linecap="round"/></svg>
<svg class="a" style="left:868.60px;top:108.50px" width="7.00" height="4.60"><path d="M1 1 L3.50 3.60 L6.00 1" fill="none" stroke="#222" stroke-width="1.25" stroke-linecap="round" stroke-linejoin="round"/></svg>
<svg class="a" style="left:810.7px;top:127.7px;" width="14.2" height="14.2" viewBox="0 0 14.2 14.2"><path d="M9 0.8l4.6 4.6-7.6 7.6H3.6L0.8 10.2z" fill="#fff" stroke="#A33BA9" stroke-width="1" stroke-linejoin="round"/><path d="M4 5.8l4.6 4.6L6 13H3.6L0.8 10.2z" fill="#C77BCB" stroke="#A33BA9" stroke-width="1" stroke-linejoin="round"/></svg>
<svg class="a" style="left:829.90px;top:132.70px" width="7.00" height="4.60"><path d="M1 1 L3.50 3.60 L6.00 1" fill="none" stroke="#222" stroke-width="1.25" stroke-linecap="round" stroke-linejoin="round"/></svg>
<svg class="a" style="left:903px;top:78.7px;" width="29.6" height="29.4" viewBox="0 0 29.6 29.4"><rect x="0.5" y="0.5" width="28" height="28" fill="#EFEFEF" stroke="#C2C2C2"/><path d="M0.5 3.4h28" stroke="#C2C2C2"/><path d="M0.5 10.6h28M0.5 18h28M0.5 23.4h28M10 18v10.5M19.4 18v10.5" stroke="#DADADA" stroke-width="0.9"/><circle cx="13.6" cy="12" r="9" fill="#F4F4F4" stroke="#B7B7B7" stroke-width="1.2"/><circle cx="13.6" cy="12" r="7.2" fill="none" stroke="#D5D5D5" stroke-width="0.8"/><rect x="8.8" y="11" width="2.8" height="4.8" fill="#C6C6C6"/><rect x="12.2" y="7.4" width="2.8" height="8.4" fill="#C6C6C6"/><rect x="15.6" y="9.4" width="2.8" height="6.4" fill="#C6C6C6"/><path d="M20.2 18.6l8.6 9.6" stroke="#B7B7B7" stroke-width="1.4"/></svg>
<div class="t" id="t55" style="top:91.70px;font-size:11.3px;color:#BDBDBD;left:898.60px;letter-spacing:-0.400px;"><i></i>Analyze</div>
<div class="t" id="t56" style="top:106.00px;font-size:11.3px;color:#BDBDBD;left:906.70px;letter-spacing:-0.593px;"><i></i>Data</div>
<svg class="a" style="left:998.20px;top:148.70px" width="9.00" height="5.80"><path d="M1 1 L4.50 4.80 L8.00 1" fill="none" stroke="#222" stroke-width="1.6" stroke-linecap="round" stroke-linejoin="round"/></svg>
<div class="a " style="left:9px;top:172px;width:91px;height:19px;background:#fff;border-radius:4px;"></div>
<div class="t" id="t57" style="top:156.00px;font-size:12px;color:#222;left:11.50px;letter-spacing:-0.669px;"><i></i>SUM</div>
<svg class="a" style="left:90.00px;top:180.00px" width="8.00" height="5.20"><path d="M1 1 L4.00 4.20 L7.00 1" fill="none" stroke="#222" stroke-width="1.5" stroke-linecap="round" stroke-linejoin="round"/></svg>
<div class="a " style="left:109.1px;top:177.4px;width:2px;height:2px;background:#555;border-radius:50%;"></div>
<div class="a " style="left:109.1px;top:180.9px;width:2px;height:2px;background:#555;border-radius:50%;"></div>
<div class="a " style="left:109.1px;top:184.4px;width:2px;height:2px;background:#555;border-radius:50%;"></div>
<div class="a " style="left:120px;top:172px;width:65px;height:19px;background:#fff;border-radius:4px;"></div>
<svg class="a" style="left:125px;top:176.5px;" width="11.5" height="10" viewBox="0 0 11.5 10"><path d="M0.6 0.4l10.2 9.2M10.8 0.4L0.6 9.6" stroke="#E8524F" stroke-width="1.1"/></svg>
<svg class="a" style="left:145px;top:176px;" width="15" height="10.5" viewBox="0 0 15 10.5"><path d="M0.6 5.8l4.6 4.2L14.4 0.6" fill="none" stroke="#4BA663" stroke-width="1.1"/></svg>
<div class="t" id="t58" style="top:156.40px;font-size:15px;color:#333;left:168.60px;font-weight:700;font-style:italic;font-family:'Liberation Serif', serif;"><i></i>f</div>
<div class="t" id="t59" style="top:156.40px;font-size:12.5px;color:#333;left:174.00px;font-weight:700;font-style:italic;font-family:'Liberation Serif', serif;"><i></i>x</div>
<div class="a " style="left:190px;top:172px;width:825px;height:19px;background:#fff;border-radius:4px;"></div>
<div class="t" id="t60" style="top:156.00px;font-size:12px;color:#2A2A2A;left:200.00px;letter-spacing:-0.777px;"><i></i>=@WRITEBACK(</div>
<div class="a " style="left:285.8px;top:174.4px;width:1px;height:14px;background:#222;"></div>
<div class="t" id="t61" style="top:156.00px;font-size:12px;color:#3A86D8;left:287.20px;letter-spacing:-0.295px;"><i></i>$B$3</div>
<div class="t" id="t62" style="top:156.00px;font-size:12px;color:#2A2A2A;left:314.60px;letter-spacing:0.199px;"><i></i>, "AP301000", "AP Import Bill", {"Type","Reference Nbr.","Vendor ID","Location","Date Document","Vendor Ref.","Document</div>
<svg class="a" style="left:1003.80px;top:180.00px" width="8.00" height="5.20"><path d="M1 1 L4.00 4.20 L7.00 1" fill="none" stroke="#222" stroke-width="1.5" stroke-linecap="round" stroke-linejoin="round"/></svg>
<div class="a " style="left:1px;top:198px;width:1021px;height:347.6px;background:#fff;"></div>
<div class="a " style="left:1px;top:198px;width:1004px;height:16.6px;background:#EFEFEF;"></div>
<div class="a " style="left:1px;top:214.6px;width:24.5px;height:331.0px;background:#EFEFEF;"></div>
<svg class="a" style="left:10.4px;top:200px;" width="14" height="13" viewBox="0 0 14 13"><path d="M13.8 0.2V12.8H0.4z" fill="#BDBDBD"/></svg>
<div class="a " style="left:25.5px;top:198px;width:125.5px;height:16.6px;background:#D2D2D2;"></div>
<div class="a " style="left:1px;top:214.4px;width:1004px;height:1px;background:#D4D4D4;"></div>
<div class="a " style="left:25.5px;top:213px;width:125.5px;height:1px;background:rgba(42,125,76,0.4);"></div>
<div class="a " style="left:25.5px;top:214px;width:125.5px;height:1px;background:#2A7D4C;"></div>
<div class="a " style="left:25.5px;top:215px;width:125.5px;height:1px;background:rgba(42,125,76,0.15);"></div>
<div class="a " style="left:24.9px;top:198px;width:1px;height:347.6px;background:#D4D4D4;"></div>
<div class="a " style="left:150.5px;top:199px;width:1px;height:15.4px;background:#C8C8C8;"></div>
<div class="a " style="left:255.0px;top:199px;width:1px;height:15.4px;background:#C8C8C8;"></div>
<div class="a " style="left:360.0px;top:199px;width:1px;height:15.4px;background:#C8C8C8;"></div>
<div class="a " style="left:465.0px;top:199px;width:1px;height:15.4px;background:#C8C8C8;"></div>
<div class="a " style="left:569.7px;top:199px;width:1px;height:15.4px;background:#C8C8C8;"></div>
<div class="a " style="left:674.1px;top:199px;width:1px;height:15.4px;background:#C8C8C8;"></div>
<div class="a " style="left:778.8px;top:199px;width:1px;height:15.4px;background:#C8C8C8;"></div>
<div class="a " style="left:884.1px;top:199px;width:1px;height:15.4px;background:#C8C8C8;"></div>
<div class="a " style="left:989.0px;top:199px;width:1px;height:15.4px;background:#C8C8C8;"></div>
<div class="a " style="left:1px;top:243.3px;width:24px;height:1px;background:#D9D9D9;"></div>
<div class="a " style="left:1px;top:261.5px;width:24px;height:1px;background:#D9D9D9;"></div>
<div class="a " style="left:1px;top:279.3px;width:24px;height:1px;background:#D9D9D9;"></div>
<div class="a " style="left:1px;top:297.5px;width:24px;height:1px;background:#D9D9D9;"></div>
<div class="a " style="left:1px;top:312.5px;width:24px;height:1px;background:#D9D9D9;"></div>
<div class="a " style="left:1px;top:331.5px;width:24px;height:1px;background:#D9D9D9;"></div>
<div class="a " style="left:1px;top:349.72px;width:24px;height:1px;background:#D9D9D9;"></div>
<div class="a " style="left:1px;top:367.94px;width:24px;height:1px;background:#D9D9D9;"></div>
<div class="a " style="left:1px;top:386.15999999999997px;width:24px;height:1px;background:#D9D9D9;"></div>
<div class="a " style="left:1px;top:404.38px;width:24px;height:1px;background:#D9D9D9;"></div>
<div class="a " style="left:1px;top:422.6px;width:24px;height:1px;background:#D9D9D9;"></div>
<div class="a " style="left:1px;top:440.82px;width:24px;height:1px;background:#D9D9D9;"></div>
<div class="a " style="left:1px;top:459.03999999999996px;width:24px;height:1px;background:#D9D9D9;"></div>
<div class="a " style="left:1px;top:477.26px;width:24px;height:1px;background:#D9D9D9;"></div>
<div class="a " style="left:1px;top:495.48px;width:24px;height:1px;background:#D9D9D9;"></div>
<div class="a " style="left:1px;top:513.7px;width:24px;height:1px;background:#D9D9D9;"></div>
<div class="a " style="left:1px;top:531.92px;width:24px;height:1px;background:#D9D9D9;"></div>
<div class="t" id="t63" style="top:181.00px;font-size:12px;color:#1F7A45;left:83.70px;"><i></i>A</div>
<div class="t" id="t64" style="top:181.00px;font-size:12px;color:#3A3A3A;left:199.40px;"><i></i>B</div>
<div class="t" id="t65" style="top:181.00px;font-size:12px;color:#3A3A3A;left:303.70px;"><i></i>C</div>
<div class="t" id="t66" style="top:181.00px;font-size:12px;color:#3A3A3A;left:408.30px;"><i></i>D</div>
<div class="t" id="t67" style="top:181.00px;font-size:12px;color:#3A3A3A;left:513.70px;"><i></i>E</div>
<div class="t" id="t68" style="top:181.00px;font-size:12px;color:#3A3A3A;left:619.10px;"><i></i>F</div>
<div class="t" id="t69" style="top:181.00px;font-size:12px;color:#3A3A3A;left:722.80px;"><i></i>G</div>
<div class="t" id="t70" style="top:181.00px;font-size:12px;color:#3A3A3A;left:828.10px;"><i></i>H</div>
<div class="t" id="t71" style="top:181.00px;font-size:12px;color:#3A3A3A;left:935.60px;"><i></i>I</div>
<div class="a " style="left:1px;top:313px;width:24px;height:19px;background:#D2D2D2;"></div>
<div class="t" id="t72" style="top:206.50px;font-size:12px;color:#3A3A3A;left:10.00px;"><i></i>1</div>
<div class="t" id="t73" style="top:227.50px;font-size:12px;color:#3A3A3A;left:10.00px;"><i></i>2</div>
<div class="t" id="t74" style="top:245.50px;font-size:12px;color:#3A3A3A;left:10.00px;"><i></i>3</div>
<div class="t" id="t75" style="top:263.50px;font-size:12px;color:#3A3A3A;left:10.00px;"><i></i>4</div>
<div class="t" id="t76" style="top:279.60px;font-size:12px;color:#3A3A3A;left:10.00px;"><i></i>5</div>
<div class="t" id="t77" style="top:297.00px;font-size:12px;color:#1F7A45;left:10.00px;"><i></i>6</div>
<div class="t" id="t78" style="top:315.60px;font-size:12px;color:#3A3A3A;left:10.00px;"><i></i>7</div>
<div class="t" id="t79" style="top:333.82px;font-size:12px;color:#3A3A3A;left:10.00px;"><i></i>8</div>
<div class="t" id="t80" style="top:352.04px;font-size:12px;color:#3A3A3A;left:10.00px;"><i></i>9</div>
<div class="t" id="t81" style="top:370.26px;font-size:12px;color:#3A3A3A;left:6.70px;letter-spacing:-0.240px;"><i></i>10</div>
<div class="t" id="t82" style="top:388.48px;font-size:12px;color:#3A3A3A;left:6.70px;letter-spacing:0.354px;"><i></i>11</div>
<div class="t" id="t83" style="top:406.70px;font-size:12px;color:#3A3A3A;left:6.70px;letter-spacing:-0.240px;"><i></i>12</div>
<div class="t" id="t84" style="top:424.92px;font-size:12px;color:#3A3A3A;left:6.70px;letter-spacing:-0.240px;"><i></i>13</div>
<div class="t" id="t85" style="top:443.14px;font-size:12px;color:#3A3A3A;left:6.70px;letter-spacing:-0.240px;"><i></i>14</div>
<div class="t" id="t86" style="top:461.36px;font-size:12px;color:#3A3A3A;left:6.70px;letter-spacing:-0.240px;"><i></i>15</div>
<div class="t" id="t87" style="top:479.58px;font-size:12px;color:#3A3A3A;left:6.70px;letter-spacing:-0.240px;"><i></i>16</div>
<div class="t" id="t88" style="top:497.80px;font-size:12px;color:#3A3A3A;left:6.70px;letter-spacing:-0.240px;"><i></i>17</div>
<div class="t" id="t89" style="top:516.02px;font-size:12px;color:#3A3A3A;left:6.70px;letter-spacing:-0.240px;"><i></i>18</div>
<div class="t" id="t90" style="top:206.50px;font-size:19px;color:#1F2A5E;left:29.50px;letter-spacing:0.426px;"><i></i>AP Import Bill</div>
<div class="a " style="left:25.5px;top:262px;width:125.5px;height:17px;background:#1F2A5E;"></div>
<div class="t" id="t91" style="top:245.50px;font-size:10.8px;color:#fff;left:28.00px;font-weight:700;letter-spacing:-0.237px;"><i></i>Connection:</div>
<div class="a " style="left:151px;top:262px;width:104.5px;height:17.8px;background:#E8EDF7;"></div>
<div class="t" id="t92" style="top:245.50px;font-size:11px;color:#222;left:153.00px;letter-spacing:-0.098px;"><i></i>Demo</div>
<div class="a " style="left:25.5px;top:298px;width:979.5px;height:15px;background:#0066FA;"></div>
<div class="a " style="left:25.5px;top:297px;width:979.5px;height:1px;background:rgba(0,102,250,0.55);"></div>
<div class="t" id="t93" style="top:279.60px;font-size:11px;color:#fff;left:27.50px;font-weight:700;letter-spacing:0.222px;"><i></i>Writeback Status</div>
<div class="t" id="t94" style="top:279.60px;font-size:11px;color:#fff;left:153.00px;font-weight:700;letter-spacing:0.183px;"><i></i>Type</div>
<div class="t" id="t95" style="top:279.60px;font-size:11px;color:#fff;left:257.50px;font-weight:700;letter-spacing:0.100px;"><i></i>Reference Nbr.</div>
<div class="t" id="t96" style="top:279.60px;font-size:11px;color:#fff;left:362.50px;font-weight:700;letter-spacing:-0.040px;"><i></i>Vendor ID</div>
<div class="t" id="t97" style="top:279.60px;font-size:11px;color:#fff;left:467.00px;font-weight:700;letter-spacing:0.421px;"><i></i>Location</div>
<div class="t" id="t98" style="top:279.60px;font-size:11px;color:#fff;left:572.00px;font-weight:700;letter-spacing:0.225px;"><i></i>Date Document</div>
<div class="t" id="t99" style="top:279.60px;font-size:11px;color:#fff;left:782.00px;font-weight:700;letter-spacing:0.147px;"><i></i>Document Descr</div>
<div class="t" id="t100" style="top:279.60px;font-size:11px;color:#fff;left:886.80px;font-weight:700;letter-spacing:-0.019px;"><i></i>Branch</div>
<div class="t" id="t101" style="top:279.60px;font-size:11px;color:#fff;left:992.00px;font-weight:700;letter-spacing:-0.200px;"><i></i>Lin</div>
<div class="t" id="t102" style="top:279.60px;font-size:11px;color:#fff;right:260.20px;font-weight:700;letter-spacing:-0.106px;"><i></i>Vendor R</div>
<div class="a " style="left:134.8px;top:298.4px;width:15.6px;height:14.5px;background:#fff;"></div>
<svg class="a" style="left:139.20000000000002px;top:304.2px;" width="6.6" height="3.4" viewBox="0 0 6.6 3.4"><path d="M0 0h6.6L3.3 3.4z" fill="#666"/></svg>
<div class="a " style="left:239.3px;top:298.4px;width:15.6px;height:14.5px;background:#fff;"></div>
<svg class="a" style="left:243.70000000000002px;top:304.2px;" width="6.6" height="3.4" viewBox="0 0 6.6 3.4"><path d="M0 0h6.6L3.3 3.4z" fill="#666"/></svg>
<div class="a " style="left:344.3px;top:298.4px;width:15.6px;height:14.5px;background:#fff;"></div>
<svg class="a" style="left:348.7px;top:304.2px;" width="6.6" height="3.4" viewBox="0 0 6.6 3.4"><path d="M0 0h6.6L3.3 3.4z" fill="#666"/></svg>
<div class="a " style="left:449.3px;top:298.4px;width:15.6px;height:14.5px;background:#fff;"></div>
<svg class="a" style="left:453.7px;top:304.2px;" width="6.6" height="3.4" viewBox="0 0 6.6 3.4"><path d="M0 0h6.6L3.3 3.4z" fill="#666"/></svg>
<div class="a " style="left:554.0px;top:298.4px;width:15.6px;height:14.5px;background:#fff;"></div>
<svg class="a" style="left:558.4px;top:304.2px;" width="6.6" height="3.4" viewBox="0 0 6.6 3.4"><path d="M0 0h6.6L3.3 3.4z" fill="#666"/></svg>
<div class="a " style="left:658.4px;top:298.4px;width:15.6px;height:14.5px;background:#fff;"></div>
<svg class="a" style="left:662.8px;top:304.2px;" width="6.6" height="3.4" viewBox="0 0 6.6 3.4"><path d="M0 0h6.6L3.3 3.4z" fill="#666"/></svg>
<div class="a " style="left:761.8999999999999px;top:298px;width:1.4px;height:15px;background:#0066FA;"></div>
<div class="a " style="left:763.0999999999999px;top:298.4px;width:15.6px;height:14.5px;background:#fff;"></div>
<svg class="a" style="left:767.4999999999999px;top:304.2px;" width="6.6" height="3.4" viewBox="0 0 6.6 3.4"><path d="M0 0h6.6L3.3 3.4z" fill="#666"/></svg>
<div class="a " style="left:867.1999999999999px;top:298px;width:1.4px;height:15px;background:#0066FA;"></div>
<div class="a " style="left:868.4px;top:298.4px;width:15.6px;height:14.5px;background:#fff;"></div>
<svg class="a" style="left:872.8px;top:304.2px;" width="6.6" height="3.4" viewBox="0 0 6.6 3.4"><path d="M0 0h6.6L3.3 3.4z" fill="#666"/></svg>
<div class="a " style="left:973.3px;top:298.4px;width:15.6px;height:14.5px;background:#fff;"></div>
<svg class="a" style="left:977.6999999999999px;top:304.2px;" width="6.6" height="3.4" viewBox="0 0 6.6 3.4"><path d="M0 0h6.6L3.3 3.4z" fill="#666"/></svg>
<div class="a " style="left:25.5px;top:350.22px;width:979.5px;height:18.21999999999997px;background:#EDEDED;"></div>
<div class="a " style="left:150.5px;top:350.22px;width:1px;height:18.21999999999997px;background:#F6F6F6;"></div>
<div class="a " style="left:255.0px;top:350.22px;width:1px;height:18.21999999999997px;background:#F6F6F6;"></div>
<div class="a " style="left:360.0px;top:350.22px;width:1px;height:18.21999999999997px;background:#F6F6F6;"></div>
<div class="a " style="left:465.0px;top:350.22px;width:1px;height:18.21999999999997px;background:#F6F6F6;"></div>
<div class="a " style="left:569.7px;top:350.22px;width:1px;height:18.21999999999997px;background:#F6F6F6;"></div>
<div class="a " style="left:674.1px;top:350.22px;width:1px;height:18.21999999999997px;background:#F6F6F6;"></div>
<div class="a " style="left:778.8px;top:350.22px;width:1px;height:18.21999999999997px;background:#F6F6F6;"></div>
<div class="a " style="left:884.1px;top:350.22px;width:1px;height:18.21999999999997px;background:#F6F6F6;"></div>
<div class="a " style="left:989.0px;top:350.22px;width:1px;height:18.21999999999997px;background:#F6F6F6;"></div>
<div class="a " style="left:25.5px;top:386.65999999999997px;width:979.5px;height:18.220000000000027px;background:#EDEDED;"></div>
<div class="a " style="left:150.5px;top:386.65999999999997px;width:1px;height:18.220000000000027px;background:#F6F6F6;"></div>
<div class="a " style="left:255.0px;top:386.65999999999997px;width:1px;height:18.220000000000027px;background:#F6F6F6;"></div>
<div class="a " style="left:360.0px;top:386.65999999999997px;width:1px;height:18.220000000000027px;background:#F6F6F6;"></div>
<div class="a " style="left:465.0px;top:386.65999999999997px;width:1px;height:18.220000000000027px;background:#F6F6F6;"></div>
<div class="a " style="left:569.7px;top:386.65999999999997px;width:1px;height:18.220000000000027px;background:#F6F6F6;"></div>
<div class="a " style="left:674.1px;top:386.65999999999997px;width:1px;height:18.220000000000027px;background:#F6F6F6;"></div>
<div class="a " style="left:778.8px;top:386.65999999999997px;width:1px;height:18.220000000000027px;background:#F6F6F6;"></div>
<div class="a " style="left:884.1px;top:386.65999999999997px;width:1px;height:18.220000000000027px;background:#F6F6F6;"></div>
<div class="a " style="left:989.0px;top:386.65999999999997px;width:1px;height:18.220000000000027px;background:#F6F6F6;"></div>
<div class="a " style="left:25.5px;top:423.1px;width:979.5px;height:18.21999999999997px;background:#EDEDED;"></div>
<div class="a " style="left:150.5px;top:423.1px;width:1px;height:18.21999999999997px;background:#F6F6F6;"></div>
<div class="a " style="left:255.0px;top:423.1px;width:1px;height:18.21999999999997px;background:#F6F6F6;"></div>
<div class="a " style="left:360.0px;top:423.1px;width:1px;height:18.21999999999997px;background:#F6F6F6;"></div>
<div class="a " style="left:465.0px;top:423.1px;width:1px;height:18.21999999999997px;background:#F6F6F6;"></div>
<div class="a " style="left:569.7px;top:423.1px;width:1px;height:18.21999999999997px;background:#F6F6F6;"></div>
<div class="a " style="left:674.1px;top:423.1px;width:1px;height:18.21999999999997px;background:#F6F6F6;"></div>
<div class="a " style="left:778.8px;top:423.1px;width:1px;height:18.21999999999997px;background:#F6F6F6;"></div>
<div class="a " style="left:884.1px;top:423.1px;width:1px;height:18.21999999999997px;background:#F6F6F6;"></div>
<div class="a " style="left:989.0px;top:423.1px;width:1px;height:18.21999999999997px;background:#F6F6F6;"></div>
<div class="a " style="left:25.5px;top:459.53999999999996px;width:979.5px;height:18.220000000000027px;background:#EDEDED;"></div>
<div class="a " style="left:150.5px;top:459.53999999999996px;width:1px;height:18.220000000000027px;background:#F6F6F6;"></div>
<div class="a " style="left:255.0px;top:459.53999999999996px;width:1px;height:18.220000000000027px;background:#F6F6F6;"></div>
<div class="a " style="left:360.0px;top:459.53999999999996px;width:1px;height:18.220000000000027px;background:#F6F6F6;"></div>
<div class="a " style="left:465.0px;top:459.53999999999996px;width:1px;height:18.220000000000027px;background:#F6F6F6;"></div>
<div class="a " style="left:569.7px;top:459.53999999999996px;width:1px;height:18.220000000000027px;background:#F6F6F6;"></div>
<div class="a " style="left:674.1px;top:459.53999999999996px;width:1px;height:18.220000000000027px;background:#F6F6F6;"></div>
<div class="a " style="left:778.8px;top:459.53999999999996px;width:1px;height:18.220000000000027px;background:#F6F6F6;"></div>
<div class="a " style="left:884.1px;top:459.53999999999996px;width:1px;height:18.220000000000027px;background:#F6F6F6;"></div>
<div class="a " style="left:989.0px;top:459.53999999999996px;width:1px;height:18.220000000000027px;background:#F6F6F6;"></div>
<div class="t" id="t103" style="top:315.30px;font-size:11.2px;color:#1E1E1E;left:27.50px;-webkit-text-stroke:0.45px;letter-spacing:0.375px;"><i></i>Pending</div>
<div class="t" id="t104" style="top:333.52px;font-size:11.2px;color:#1E1E1E;left:27.50px;-webkit-text-stroke:0.45px;letter-spacing:0.375px;"><i></i>Pending</div>
<div class="t" id="t105" style="top:351.74px;font-size:11.2px;color:#1E1E1E;left:27.50px;-webkit-text-stroke:0.45px;letter-spacing:0.375px;"><i></i>Pending</div>
<div class="t" id="t106" style="top:369.96px;font-size:11.2px;color:#1E1E1E;left:27.50px;-webkit-text-stroke:0.45px;letter-spacing:0.375px;"><i></i>Pending</div>
<div class="t" id="t107" style="top:388.18px;font-size:11.2px;color:#1E1E1E;left:27.50px;-webkit-text-stroke:0.45px;letter-spacing:0.375px;"><i></i>Pending</div>
<div class="t" id="t108" style="top:406.40px;font-size:11.2px;color:#1E1E1E;left:27.50px;-webkit-text-stroke:0.45px;letter-spacing:0.375px;"><i></i>Pending</div>
<div class="t" id="t109" style="top:424.62px;font-size:11.2px;color:#1E1E1E;left:27.50px;-webkit-text-stroke:0.45px;letter-spacing:0.375px;"><i></i>Pending</div>
<div class="t" id="t110" style="top:442.84px;font-size:11.2px;color:#1E1E1E;left:27.50px;-webkit-text-stroke:0.45px;letter-spacing:0.375px;"><i></i>Pending</div>
<div class="a " style="left:150.5px;top:313px;width:105.0px;height:19.4px;background:#EBDCDC;border:1px solid #DC6A6C;border-right:none;"></div>
<div class="a " style="left:255.0px;top:313px;width:105.5px;height:19.4px;background:#E1DEEB;border:1px solid #A07AD0;border-right:none;"></div>
<div class="a " style="left:360.0px;top:313px;width:105.5px;height:19.4px;background:#D7E3DA;border:1px solid #4FA35F;border-right:none;"></div>
<div class="a " style="left:465.0px;top:313px;width:105.20000000000005px;height:19.4px;background:#ECDBE4;border:1px solid #CB6DA6;border-right:none;"></div>
<div class="a " style="left:569.7px;top:313px;width:104.89999999999998px;height:19.4px;background:#EFDED7;border:1px solid #E3935C;border-right:none;"></div>
<div class="a " style="left:674.1px;top:313px;width:105.19999999999993px;height:19.4px;background:#DAE2E4;border:1px solid #549AA6;border-right:none;"></div>
<div class="a " style="left:778.8px;top:313px;width:105.80000000000007px;height:19.4px;background:#DDE2EE;border:1px solid #5F86DA;border-right:none;"></div>
<div class="a " style="left:884.1px;top:313px;width:105.39999999999998px;height:19.4px;background:#EFDDDD;border:1px solid #DC6A6C;border-right:none;"></div>
<div class="a " style="left:989.0px;top:313px;width:16.0px;height:19.4px;background:#E1DEEB;border:1px solid #A07AD0;border-right:none;"></div>
<div class="a " style="left:25px;top:312.6px;width:127px;height:20px;background:#F1F1F1;border:2px solid #33835A;"></div>
<div class="a " style="left:150px;top:330.4px;width:3px;height:3px;background:#2A7D4C;"></div>
<div class="t" id="t111" style="top:295.20px;font-size:11.2px;color:#1E1E1E;left:28.50px;-webkit-text-stroke:0.45px;letter-spacing:-0.053px;"><i></i>=@WRITEBACK($B$3,</div>
<div class="a " style="left:150.5px;top:260.8px;width:105.5px;height:19.4px;border:1px solid #4A7BDB;"></div>
<div class="a " style="left:149.70000000000002px;top:260.09999999999997px;width:2.2px;height:2.2px;background:#4A7BDB;"></div>
<div class="a " style="left:254.5px;top:260.09999999999997px;width:2.2px;height:2.2px;background:#4A7BDB;"></div>
<div class="a " style="left:149.70000000000002px;top:278.7px;width:2.2px;height:2.2px;background:#4A7BDB;"></div>
<div class="a " style="left:254.5px;top:278.7px;width:2.2px;height:2.2px;background:#4A7BDB;"></div>
<div class="a " style="left:1005px;top:198px;width:17px;height:347.6px;background:#E5ECED;"></div>
<div class="a " style="left:216px;top:213.4px;width:558px;height:61.4px;background:#fff;border:1px solid #D4D4D4;box-shadow:1px 2px 4px rgba(0,0,0,0.25);"></div>
<div class="t" id="t112" style="top:195.00px;font-size:10.9px;color:#3F3FB5;left:220.00px;letter-spacing:-0.971px;"><i></i>WRITEBACK</div>
<div class="t" id="t113" style="top:195.00px;font-size:10.9px;color:#6A6A6A;left:276.80px;"><i></i>(</div>
<div class="t" id="t114" style="top:195.00px;font-size:10.9px;color:#333;left:280.50px;font-weight:700;letter-spacing:-0.201px;"><i></i>Connection</div>
<div class="t" id="t115" style="top:195.00px;font-size:10.9px;color:#6A6A6A;left:338.60px;letter-spacing:-0.093px;"><i></i>, ScreenID, ImportScenarioName, DataColumnNames, [OutputRange], RangeOrDataItem,</div>
<div class="t" id="t116" style="top:210.00px;font-size:10.9px;color:#6A6A6A;left:220.50px;letter-spacing:-0.030px;"><i></i>[AnotherDataItem1], ...)</div>
<div class="t" id="t117" style="top:225.40px;font-size:10.9px;color:#6A6A6A;left:220.00px;letter-spacing:-0.017px;"><i></i>Write back data using the screen ID and the import scenario specified.</div>
<div class="t" id="t118" style="top:240.40px;font-size:10.9px;color:#333;left:220.00px;font-weight:700;font-style:italic;letter-spacing:-0.336px;"><i></i>Connection:</div>
<div class="t" id="t119" style="top:240.40px;font-size:10.9px;color:#6A6A6A;left:283.00px;font-style:italic;letter-spacing:-0.007px;"><i></i>Name of the connection as configured in the connection manager.</div>
<div class="a " style="left:1007px;top:198px;width:15.4px;height:348.6px;background:#F5F5F5;border-radius:7.7px;"></div>
<svg class="a" style="left:1010.3px;top:202.2px;" width="8.4" height="6.4" viewBox="0 0 8.4 6.4"><path d="M4.2 0.3L8.2 6.2H0.2z" fill="#5E5E5E"/></svg>
<div class="a " style="left:1011px;top:213.2px;width:7.2px;height:283.3px;background:#717171;border-radius:3.6px;"></div>
<svg class="a" style="left:1010.3px;top:536px;" width="8.4" height="6.4" viewBox="0 0 8.4 6.4"><path d="M0.2 0.3H8.2L4.2 6.2z" fill="#5E5E5E"/></svg>
<div class="a " style="left:1px;top:545.6px;width:1021px;height:30px;background:linear-gradient(90deg,#E9E8E8 0%,#E7E9E9 40%,#E2E8E8 100%);"></div>
<svg class="a" style="left:20px;top:555.5px;" width="5.4" height="9.2" viewBox="0 0 5.4 9.2"><path d="M4.8 0.5L0.6 4.6l4.2 4.1" fill="none" stroke="#555" stroke-width="1.1"/></svg>
<svg class="a" style="left:49.5px;top:555.5px;" width="5.4" height="9.2" viewBox="0 0 5.4 9.2"><path d="M0.6 0.5l4.2 4.1-4.2 4.1" fill="none" stroke="#9C9C9C" stroke-width="1.1"/></svg>
<div class="a " style="left:76px;top:558.3px;width:2.6px;height:2.6px;background:#444;border-radius:50%;"></div>
<div class="a " style="left:79.8px;top:558.3px;width:2.6px;height:2.6px;background:#444;border-radius:50%;"></div>
<div class="a " style="left:83.6px;top:558.3px;width:2.6px;height:2.6px;background:#444;border-radius:50%;"></div>
<div class="t" id="t120" style="top:535.00px;font-size:12.8px;color:#3F3F3F;left:109.50px;letter-spacing:0.031px;"><i></i>Distribution List</div>
<div class="a " style="left:211.5px;top:553px;width:1px;height:15px;background:#D3D7D5;"></div>
<div class="t" id="t121" style="top:535.00px;font-size:12.8px;color:#3F3F3F;left:223.50px;letter-spacing:-0.408px;"><i></i>Branches</div>
<div class="a " style="left:286.5px;top:553px;width:1px;height:15px;background:#D3D7D5;"></div>
<div class="t" id="t122" style="top:535.00px;font-size:12.8px;color:#3F3F3F;left:299.50px;letter-spacing:-0.158px;"><i></i>GL Writeback</div>
<div class="a " style="left:387.5px;top:553px;width:1px;height:15px;background:#D3D7D5;"></div>
<div class="t" id="t123" style="top:535.00px;font-size:12.8px;color:#3F3F3F;left:399.50px;letter-spacing:-0.466px;"><i></i>Sheet2</div>
<div class="a " style="left:450px;top:553px;width:1px;height:15px;background:#D3D7D5;"></div>
<div class="a " style="left:454px;top:545.6px;width:96.5px;height:25.4px;background:#fff;border-radius:0 0 5px 5px;"></div>
<div class="t" id="t124" style="top:533.00px;font-size:12.8px;color:#1C1C1C;left:462.00px;font-weight:700;letter-spacing:-0.324px;"><i></i>AP Import Bill</div>
<div class="a " style="left:462px;top:566.5px;width:80px;height:2px;background:#1F7A45;border-radius:1px;"></div>
<div class="a " style="left:553.5px;top:553px;width:1px;height:15px;background:#D3D7D5;"></div>
<svg class="a" style="left:592.5px;top:554.5px;" width="10.5" height="10.5" viewBox="0 0 10.5 10.5"><path d="M5.25 0v10.5M0 5.25h10.5" stroke="#444" stroke-width="1"/></svg>
<div class="a " style="left:827px;top:556px;width:2px;height:2px;background:#333;"></div>
<div class="a " style="left:827px;top:559.2px;width:2px;height:2px;background:#333;"></div>
<div class="a " style="left:827px;top:562.4px;width:2px;height:2px;background:#333;"></div>
<div class="a " style="left:843px;top:552px;width:163.5px;height:16px;background:#F5F5F5;border-radius:8px;"></div>
<svg class="a" style="left:847.5px;top:556px;" width="6.6" height="8.4" viewBox="0 0 6.6 8.4"><path d="M6.3 0.2V8.2L0.3 4.2z" fill="#5E5E5E"/></svg>
<svg class="a" style="left:995.5px;top:556px;" width="6.6" height="8.4" viewBox="0 0 6.6 8.4"><path d="M0.3 0.2V8.2L6.3 4.2z" fill="#5E5E5E"/></svg>
<div class="a " style="left:858px;top:556.2px;width:87.5px;height:7.4px;background:#717171;border-radius:3.7px;"></div>
<div class="a " style="left:1px;top:575.4px;width:1021px;height:19.6px;background:#F4F4F4;"></div>
<div class="a " style="left:1px;top:575px;width:1021px;height:1px;background:#D9D9D8;"></div>
<div class="t" id="t125" style="top:559.60px;font-size:9.8px;color:#363636;left:8.20px;letter-spacing:-0.397px;"><i></i>Edit</div>
<svg class="a" style="left:40.5px;top:578.4px;" width="13.6" height="13.4" viewBox="0 0 13.6 13.4"><circle cx="5.2" cy="2" r="1.7" fill="none" stroke="#3A3A3A" stroke-width="1"/><path d="M1 5.2h8.4M5.2 5.2v3.6M5.2 8.4L3 12.6M5.2 8.4l1.2 2" fill="none" stroke="#3A3A3A" stroke-width="2.7" stroke-linecap="round" stroke-linejoin="round"/><path d="M1 5.2h8.4M5.2 5.2v3.6M5.2 8.4L3 12.6M5.2 8.4l1.2 2" fill="none" stroke="#F4F4F4" stroke-width="0.9" stroke-linecap="round" stroke-linejoin="round"/><path d="M8 8.8l4.6 4.2M12.6 8.8L8 13" fill="none" stroke="#3A3A3A" stroke-width="1" stroke-linecap="round"/></svg>
<div class="t" id="t126" style="top:559.60px;font-size:9.8px;color:#363636;left:57.00px;letter-spacing:-0.164px;"><i></i>Accessibility: Investigate</div>
<svg class="a" style="left:641.5px;top:579px;" width="13" height="12.4" viewBox="0 0 13 12.4"><path d="M6 8.6H0.5V0.5h11.2v4.6" fill="none" stroke="#333" stroke-width="0.9"/><path d="M2.4 10.6h3.4" stroke="#333" stroke-width="0.9"/><circle cx="9.2" cy="8.6" r="2.1" fill="none" stroke="#333" stroke-width="1.5" stroke-dasharray="1.3 0.9"/><circle cx="9.2" cy="8.6" r="0.9" fill="none" stroke="#333" stroke-width="0.8"/></svg>
<div class="t" id="t127" style="top:559.00px;font-size:9.8px;color:#363636;left:657.50px;letter-spacing:-0.242px;"><i></i>Display Settings</div>
<svg class="a" style="left:753px;top:579.5px;" width="12" height="11" viewBox="0 0 12 11"><rect x="0.5" y="0.5" width="11" height="10" fill="none" stroke="#C2C2C2"/><path d="M4.2 0.5v10M7.8 0.5v10M0.5 3.8h11M0.5 7.2h11" stroke="#C2C2C2" stroke-width="0.9"/></svg>
<svg class="a" style="left:790px;top:579.5px;" width="12.6" height="11.4" viewBox="0 0 12.6 11.4"><rect x="0.5" y="0.5" width="11.6" height="10.4" fill="none" stroke="#C2C2C2"/><rect x="3" y="2.8" width="6.6" height="5.8" fill="none" stroke="#C2C2C2" stroke-width="0.9"/><path d="M4.6 4.8h3.4M4.6 6.6h3.4" stroke="#C2C2C2" stroke-width="0.7"/></svg>
<svg class="a" style="left:826px;top:579.5px;" width="13" height="11.4" viewBox="0 0 13 11.4"><rect x="0.5" y="0.5" width="12" height="10.4" fill="none" stroke="#C2C2C2"/><path d="M3.6 0.5v5.2h5.2V0.5M6.2 0.5v5.2" fill="none" stroke="#C2C2C2" stroke-width="0.9"/></svg>
<div class="a " style="left:857px;top:585px;width:6px;height:1px;background:#CFCFCF;"></div>
<div class="a " style="left:869px;top:584.6px;width:90.5px;height:1.1px;background:#777;"></div>
<div class="a " style="left:913.6px;top:582px;width:1.2px;height:6.4px;background:#555;"></div>
<svg class="a" style="left:965.2px;top:582.8px;" width="5.8" height="5.8" viewBox="0 0 5.8 5.8"><path d="M2.8 0v5.6M0 2.8h5.6" stroke="#CFCFCF" stroke-width="1"/></svg>
<div class="t" id="t128" style="top:559.60px;font-size:9.8px;color:#C8C8C8;left:984.00px;letter-spacing:-0.875px;"><i></i>100%</div>
<svg class="a" style="left:0px;top:0px;" width="1" height="1"><path d="M0 0h6.5a6.5 6.5 0 0 0-6.5 6.5z" fill="#3B7482" transform="rotate(0)"/></svg>
<svg class="a" style="left:1024px;top:0px;" width="1" height="1"><path d="M0 0h6.5a6.5 6.5 0 0 0-6.5 6.5z" fill="#3B7482" transform="rotate(90)"/></svg>
<svg class="a" style="left:1024px;top:596px;" width="1" height="1"><path d="M0 0h6.5a6.5 6.5 0 0 0-6.5 6.5z" fill="#1C1C1C" transform="rotate(180)"/></svg>
<svg class="a" style="left:0px;top:596px;" width="1" height="1"><path d="M0 0h6.5a6.5 6.5 0 0 0-6.5 6.5z" fill="#1C1C1C" transform="rotate(270)"/></svg>
</div></body></html>
